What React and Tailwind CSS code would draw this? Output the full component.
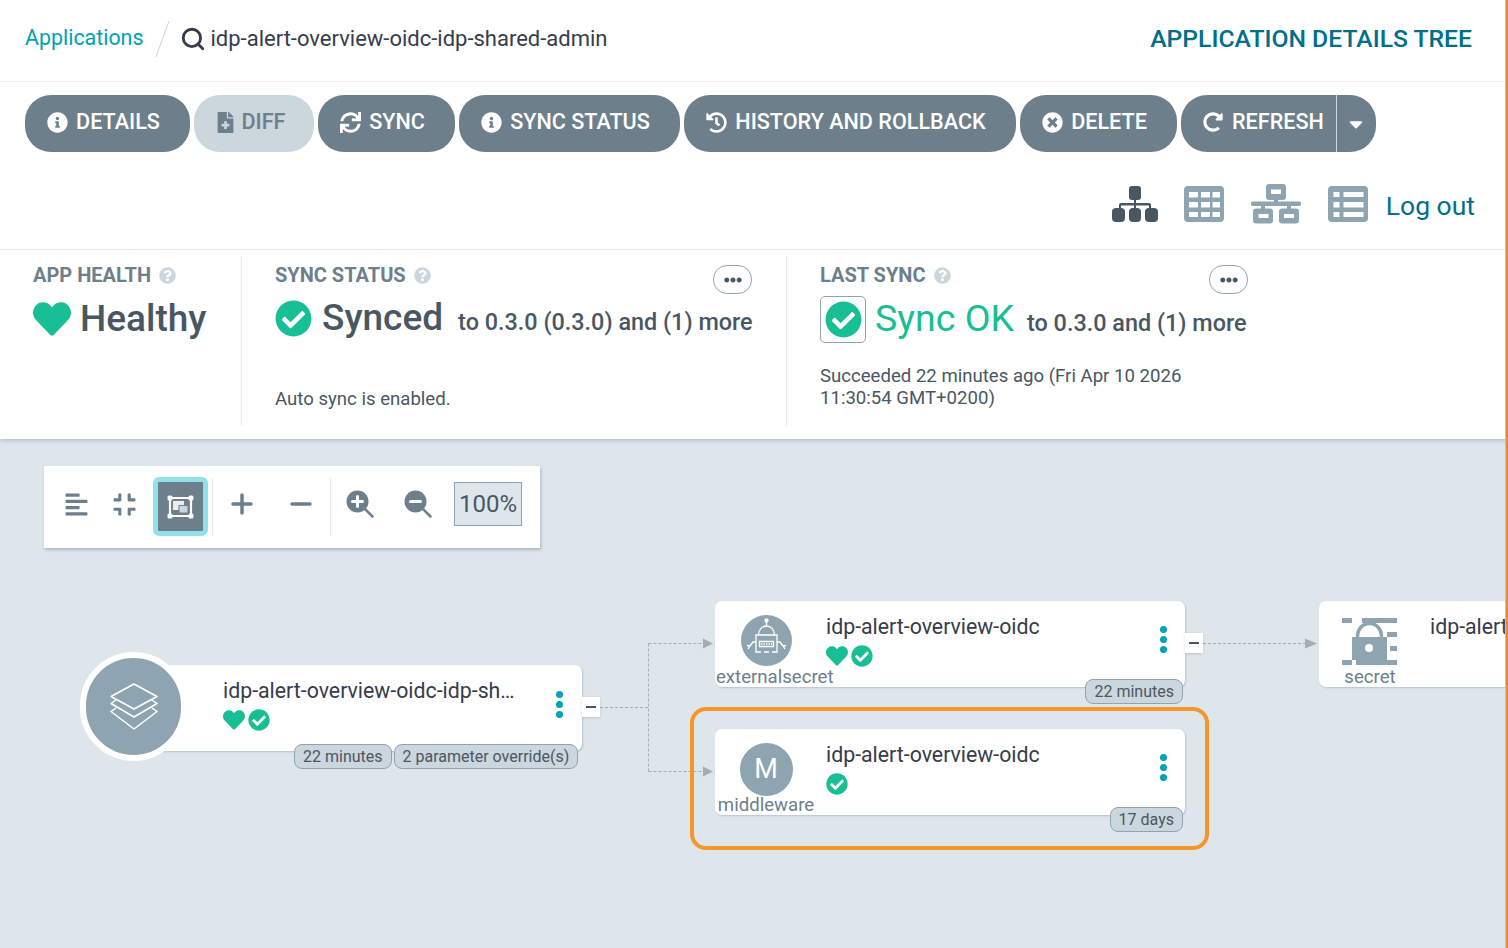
import { Search } from 'lucide-react';
import {
  FaInfoCircle, FaFileMedical, FaSync, FaHistory, FaTimesCircle, FaRedoAlt, FaCaretDown,
  FaHeart, FaCheckCircle, FaQuestionCircle, FaEllipsisH, FaAlignLeft, FaCompress,
} from 'react-icons/fa';

const buttons = [
  { label: 'DETAILS', icon: FaInfoCircle, width: 'w-[165px]' },
  { label: 'DIFF', icon: FaFileMedical, width: 'w-[120px]', disabled: true },
  { label: 'SYNC', icon: FaSync, width: 'w-[137px]' },
  { label: 'SYNC STATUS', icon: FaInfoCircle, width: 'w-[221px]' },
  { label: 'HISTORY AND ROLLBACK', icon: FaHistory, width: 'w-[332px]' },
  { label: 'DELETE', icon: FaTimesCircle, width: 'w-[157px]' },
];

const ActionButton = ({ label, icon: Icon, width, disabled }) => (
  <button
    className={`flex h-[57px] items-center justify-center rounded-[26px] pr-[8px] text-[21.6px] font-medium ${width} ${
      disabled ? 'gap-[6px] bg-[#ccd6dd] text-[#6d7f8b]' : 'gap-[8px] bg-[#6d7f8b] text-white'
    }`}
  >
    <Icon className="mb-[3px] text-[21px]" />
    <span className="mb-[2px]">{label}</span>
  </button>
);

const Label = ({ children }) => (
  <div className="flex h-[24px] items-center gap-[8px] text-[20px] font-bold text-[#6d7f8b]">
    <span>{children}</span>
    <FaQuestionCircle className="text-[17px] text-[#ccd6dd]" />
  </div>
);

const MoreButton = () => (
  <button className="flex h-[29px] w-[39px] items-center justify-center rounded-[14px] border border-[#8fa4b1] bg-white text-[18px] text-[#495763]">
    <FaEllipsisH />
  </button>
);

const ToolIcon = ({ icon: Icon, width }) => (
  <div className={`flex h-[58px] items-center justify-center text-[25px] text-[#6d7f8b] ${width}`}>
    <Icon />
  </div>
);

const Check = () => <FaCheckCircle className="text-[22px] text-[#18be94]" />;
const Heart = () => <FaHeart className="text-[22px] text-[#18be94]" />;

const Tag = ({ children }) => (
  <span className="flex h-[25px] items-center rounded-[8px] border border-[#8fa4b1] bg-[#ccd6dd] px-[8px] text-[16px] text-[#495763]">
    {children}
  </span>
);

const Dots = () => (
  <div className="flex flex-col gap-[3px]">
    <span className="h-[7px] w-[7px] rounded-full bg-[#00a2b3]" />
    <span className="h-[7px] w-[7px] rounded-full bg-[#00a2b3]" />
    <span className="h-[7px] w-[7px] rounded-full bg-[#00a2b3]" />
  </div>
);

const Collapse = ({ className }) => (
  <div className={`absolute flex h-[20px] w-[18px] items-center justify-center bg-white shadow-sm ${className}`}>
    <span className="h-[2px] w-[10px] bg-[#495763]" />
  </div>
);

const Node = ({ className, left, label, statuses, tags, title = 'idp-alert-overview-oidc' }) => (
  <div className={`absolute flex h-[86px] rounded-[7px] bg-white shadow-[1px_1px_2px_#b5c2cc] ${className}`}>
    <div className="relative flex w-[111px] shrink-0 flex-col items-center pr-[9px]">
      {left}
      <span className="absolute bottom-[-5px] left-[1px] w-[100px] text-center text-[18.6px] whitespace-nowrap text-[#6d7f8b]">{label}</span>
    </div>
    <div className="flex-1 pt-[12px]">
      <div className="text-[21.3px] leading-[28px] whitespace-nowrap text-[#363c4a]">{title}</div>
      <div className="mt-[4px] flex items-center gap-[3px]">{statuses}</div>
    </div>
    {tags && (
      <div className="pt-[25px] pr-[18px]">
        <Dots />
      </div>
    )}
    {tags && <div className="absolute right-[2px] bottom-[-17px] flex gap-[2px]">{tags}</div>}
  </div>
);

const RobotIcon = () => (
  <svg viewBox="0 0 51 51" className="mt-[14px] h-[51px] w-[51px]">
    <circle cx="25.5" cy="25.5" r="25.5" fill="#8fa4b1" />
    <g fill="none" stroke="#fff" strokeWidth="1.3">
      <circle cx="25.5" cy="5.500" r="1.500" fill="#fff" />
      <path d="M25.500 7V11M17.500 20c0-5 3.500-9 8-9s8 4 8 9" />
      <path d="M20 37h-5V20h21v17h-5M23 37h5" />
      <path d="M18.500 26.500h14v5h-14z" />
      <path d="M20 29h11" strokeDasharray="1.500 1" />
      <path d="M15 27h-3l-3 4-2 3M9 31l-3-.5M36 27h3l3 4 2 3M42 31l3-.5" />
    </g>
  </svg>
);

const SecretIcon = () => (
  <svg viewBox="0 0 55 47" className="mt-[17px] -ml-[2px] h-[47px] w-[55px]" fill="#8fa4b1">
    <path d="M0 0h10v5H0zM20 0h35v5H20zM45 14h10v5H45zM48 28h7v5h-7zM0 42h10v5H0zM14 42h41v5H14z" />
    <path d="M15.500 19c0-8 5-13.500 12-13.500S39.500 11 39.500 19" fill="none" stroke="#8fa4b1" strokeWidth="3.500" />
    <path fillRule="evenodd" d="M10 19h35v23H10z M27 26a4 4 0 100 8 4 4 0 000-8z" />
  </svg>
);

const LayersIcon = () => (
  <svg viewBox="0 0 48 47" className="h-[47px] w-[48px]" fill="none" stroke="#fff" strokeWidth="1.500" strokeLinejoin="round">
    <path d="M24 1L47 13.500 24 26 1 13.500z" />
    <path d="M6 17L1 20.500 24 34 47 20.500 42 17" />
    <path d="M6 25L1 28.500 24 46 47 28.500 42 25" />
  </svg>
);

const SitemapIcon = () => (
  <svg viewBox="0 0 46 36" className="h-[36px] w-[46px]" fill="#495763">
    <rect x="17" y="0" width="12" height="14" rx="3" />
    <path d="M22 14h2v3h13a2 2 0 012 2v3h-2v-2.500H24V22h-2v-2.500H9V22H7v-3a2 2 0 012-2h13z" />
    <rect x="0" y="22" width="13" height="14" rx="4" />
    <rect x="17" y="22" width="12" height="14" rx="4" />
    <rect x="33" y="22" width="13" height="14" rx="4" />
  </svg>
);

const GridIcon = () => (
  <svg viewBox="0 0 40 36" className="h-[36px] w-[40px]">
    <rect width="40" height="36" rx="4" fill="#8fa4b1" />
    <path
      fill="#fff"
      d="M5 6h9v5.500H5zM17 6h9v5.500h-9zM28.500 6H36v5.500h-7.500zM5 16h9v5.500H5zM17 16h9v5.500h-9zM28.500 16H36v5.500h-7.500zM5 26h9v5H5zM17 26h9v5h-9zM28.500 26H36v5h-7.500z"
    />
  </svg>
);

const NetworkIcon = () => (
  <svg viewBox="0 0 50 40" className="h-[40px] w-[50px]">
    <path
      fill="#8fa4b1"
      fillRule="evenodd"
      d="M18 0h14a3 3 0 013 3v10a3 3 0 01-3 3h-5v1.500h21a2 2 0 010 4.500H40v2.500h5a3 3 0 013 3v9a3 3 0 01-3 3H31a3 3 0 01-3-3v-9a3 3 0 013-3h5V22H14v2.500h5a3 3 0 013 3v9a3 3 0 01-3 3H5a3 3 0 01-3-3v-9a3 3 0 013-3h5V22H2a2 2 0 010-4.500h21V16h-5a3 3 0 01-3-3V3a3 3 0 013-3zM20 5.500V10h10V5.500zM7.500 30v4h10v-4zM33 30v4h10v-4z"
    />
  </svg>
);

const TableIcon = () => (
  <svg viewBox="0 0 40 36" className="h-[36px] w-[40px]">
    <rect width="40" height="36" rx="4" fill="#8fa4b1" />
    <path
      fill="#fff"
      d="M5.500 6h6v5h-6zM15.500 6h20v5h-20zM5.500 16h6v5.500h-6zM15.500 16h20v5.500h-20zM5.500 26h6v5h-6zM15.500 26h20v5h-20z"
    />
  </svg>
);

const UngroupIcon = () => (
  <svg viewBox="0 0 27 24" className="h-[24px] w-[27px]">
    <path d="M3 3h21v18H3z" fill="none" stroke="#fff" strokeWidth="2.200" />
    <rect x="0.500" y="0.500" width="5" height="5" rx="1.500" fill="#fff" />
    <rect x="21.500" y="0.500" width="5" height="5" rx="1.500" fill="#fff" />
    <rect x="0.500" y="18.500" width="5" height="5" rx="1.500" fill="#fff" />
    <rect x="21.500" y="18.500" width="5" height="5" rx="1.500" fill="#fff" />
    <rect x="6" y="6" width="11" height="9" fill="#e8edf0" />
    <rect x="12" y="10.500" width="9" height="7.500" fill="#ccd6dd" stroke="#6d7f8b" />
  </svg>
);

const PlusIcon = () => (
  <svg viewBox="0 0 22 22" className="h-[22px] w-[22px]" stroke="#6d7f8b" strokeWidth="3.500" strokeLinecap="round">
    <path d="M2 11h18M11 2v18" />
  </svg>
);

const MinusIcon = () => (
  <svg viewBox="0 0 22 22" className="h-[22px] w-[22px]" stroke="#6d7f8b" strokeWidth="3.500" strokeLinecap="round">
    <path d="M2 11h18" />
  </svg>
);

const ZoomIcon = ({ plus }) => (
  <svg viewBox="0 0 28 28" className="h-[28px] w-[28px]">
    <path d="M18 18l8.500 8.500" stroke="#6d7f8b" strokeWidth="2.500" strokeLinecap="round" />
    <circle cx="11.500" cy="11.500" r="11" fill="#6d7f8b" />
    <path d={plus ? 'M6.500 11.500h10M11.500 6.500v10' : 'M6.500 11.500h10'} stroke="#fff" strokeWidth="3" strokeLinecap="round" />
  </svg>
);

const ToolCell = ({ width, children }) => (
  <div className={`flex h-[58px] items-center justify-center ${width}`}>{children}</div>
);

const Edges = () => (
  <svg className="absolute inset-0 h-full w-full" fill="none" stroke="#a3adb5" strokeDasharray="3 2">
    <path d="M600 268.500H648.500M648.500 204.500V332.500M648.500 204.500H703M648.500 332.500H703M1203 204.500H1305" />
    <path d="M703 199.500l10 5-10 5zM703 327.500l10 5-10 5zM1305 199.500l12 5-12 5z" fill="#a3adb5" stroke="none" />
  </svg>
);

export default function App() {
  return (
    <div className="relative flex h-[948px] w-[1508px] flex-col overflow-hidden bg-white font-['Roboto',sans-serif]">
      <header className="flex h-[82px] shrink-0 items-center justify-between border-b border-[#eef1f3] pr-[36px] pb-[4px] pl-[25px]">
        <div className="flex items-center">
          <a className="text-[21.4px] text-[#00a2b3]">Applications</a>
          <div className="mr-[17px] ml-[19px] h-[38px] w-px rotate-[20deg] bg-[#ccd6dd]" />
          <Search size={26} strokeWidth={2.6} className="mr-[4px] text-[#363c4a]" />
          <span className="text-[22px] text-[#363c4a]">idp-alert-overview-oidc-idp-shared-admin</span>
        </div>
        <div className="text-[24.7px] font-medium text-[#006f8a]">APPLICATION DETAILS TREE</div>
      </header>

      <div className="flex shrink-0 gap-[4px] pt-[13px] pl-[25px]">
        {buttons.map((b) => (
          <ActionButton key={b.label} {...b} />
        ))}
        <div className="flex h-[57px] overflow-hidden rounded-[26px] bg-[#6d7f8b] text-[21.6px] font-medium text-white">
          <div className="flex w-[156px] items-center gap-[9px] border-r border-[#ccd6dd] pl-[22px]">
            <FaRedoAlt className="mb-[3px] text-[20px]" />
            <span className="mb-[2px]">REFRESH</span>
          </div>
          <div className="flex w-[39px] items-center justify-center pr-[1px]">
            <FaCaretDown className="text-[22px]" />
          </div>
        </div>
      </div>

      <div className="flex h-[98px] shrink-0 items-center justify-end border-b border-[#eef1f3] pt-[7px] pr-[33px]">
        <div className="mr-[26px]"><SitemapIcon /></div>
        <div className="mr-[27px]"><GridIcon /></div>
        <div className="mr-[27px]"><NetworkIcon /></div>
        <div className="mr-[18px]"><TableIcon /></div>
        <a className="mt-[4px] text-[26.5px] text-[#006f8a]">Log out</a>
      </div>

      <section className="relative z-10 flex h-[189px] shrink-0 bg-white pt-[6px] shadow-[0_2px_4px_#b5c2cc]">
        <div className="h-[170px] w-[242px] border-r border-[#e4eaee] pt-[7px] pl-[33px]">
          <Label>APP HEALTH</Label>
          <div className="mt-[10px] flex items-center gap-[9px] text-[37px] leading-[44px] font-medium text-[#495763]">
            <FaHeart className="text-[38px] text-[#18be94]" />
            <span>Healthy</span>
          </div>
        </div>
        <div className="relative h-[170px] w-[545px] border-r border-[#e4eaee] pt-[7px] pl-[33px]">
          <Label>SYNC STATUS</Label>
          <div className="mt-[9px] flex items-center text-[#495763]">
            <FaCheckCircle className="mr-[10px] text-[37px] text-[#18be94]" />
            <div className="flex items-baseline">
              <span className="mr-[15px] text-[37px] leading-[44px] font-medium">Synced</span>
              <span className="text-[23.4px] leading-[30px] font-medium">to 0.3.0 (0.3.0) and (1) more</span>
            </div>
          </div>
          <p className="mt-[46px] text-[18.6px] text-[#495763]">Auto sync is enabled.</p>
          <div className="absolute top-[9px] right-[34px]">
            <MoreButton />
          </div>
        </div>
        <div className="relative w-[461px] pt-[7px] pl-[33px]">
          <Label>LAST SYNC</Label>
          <div className="mt-[9px] flex items-center text-[#495763]">
            <div className="mr-[9px] flex h-[47px] w-[46px] items-center justify-center rounded-[5px] border border-[#8fa4b1]">
              <FaCheckCircle className="text-[37px] text-[#18be94]" />
            </div>
            <div className="mb-[3px] flex items-baseline">
              <span className="mr-[13px] text-[37.5px] leading-[44px] text-[#18be94]">Sync OK</span>
              <span className="text-[23.4px] leading-[30px] font-medium">to 0.3.0 and (1) more</span>
            </div>
          </div>
          <p className="mt-[22px] w-[400px] text-[18.6px] leading-[22px] text-[#495763]">
            Succeeded 22 minutes ago (Fri Apr 10 2026 11:30:54 GMT+0200)
          </p>
          <div className="absolute top-[9px] right-[0px]">
            <MoreButton />
          </div>
        </div>
      </section>

      <main className="relative flex-1 bg-[#dee6eb]">
        <div className="absolute top-[27px] left-[44px] z-10 flex h-[82px] w-[496px] items-center bg-white pb-[6px] pl-[9px] shadow-[1px_2px_3px_#a9b8c3]">
          <ToolIcon icon={FaAlignLeft} width="w-[46px]" />
          <ToolIcon icon={FaCompress} width="w-[50px]" />
          <div className="mt-[5px] ml-[4px] flex h-[59px] w-[55px] items-center justify-center rounded-[6px] border-[5px] border-[#92e1ea] bg-[#6d7f8b]">
            <UngroupIcon />
          </div>
          <div className="mt-[5px] ml-[4px] h-[58px] w-px bg-[#e4eaee]" />
          <ToolCell width="w-[58px]"><PlusIcon /></ToolCell>
          <ToolCell width="w-[59px]"><MinusIcon /></ToolCell>
          <div className="mt-[5px] h-[58px] w-px bg-[#e4eaee]" />
          <ToolCell width="w-[58px]"><ZoomIcon plus /></ToolCell>
          <ToolCell width="w-[58px]"><ZoomIcon /></ToolCell>
          <div className="ml-[7px] flex h-[44px] w-[68px] items-center justify-center border border-[#8fa4b1] bg-[#dee6eb] text-[24px] text-[#495763]">
            100%
          </div>
        </div>

        <Edges />

        <Node className="top-[226px] left-[133px] w-[449px]" left={null} label="" title="" />
        <div className="absolute top-[226px] left-[223px] w-[300px]">
          <div className="pt-[12px] text-[21.3px] leading-[28px] whitespace-nowrap text-[#363c4a]">idp-alert-overview-oidc-idp-sh…</div>
          <div className="mt-[4px] flex items-center gap-[3px]">
            <Heart />
            <Check />
          </div>
        </div>
        <div className="absolute top-[213px] left-[80px] flex h-[109px] w-[107px] items-center justify-center rounded-full border-[6px] border-white bg-[#8fa4b1]">
          <LayersIcon />
        </div>
        <div className="absolute top-[252px] left-[556px]">
          <Dots />
        </div>
        <Collapse className="top-[258px] left-[582px]" />
        <div className="absolute top-[305px] left-[294px] flex gap-[2px]">
          <Tag>22 minutes</Tag>
          <Tag>2 parameter override(s)</Tag>
        </div>

        <Node
          className="top-[162px] left-[715px] w-[470px]"
          left={<RobotIcon />}
          label="externalsecret"
          statuses={<><Heart /><Check /></>}
          tags={<Tag>22 minutes</Tag>}
        />
        <Collapse className="top-[194px] left-[1185px]" />

        <div className="absolute top-[268px] left-[690px] h-[143px] w-[519px] rounded-[16px] border-[4px] border-[#f4962a]" />
        <Node
          className="top-[290px] left-[715px] w-[470px]"
          left={
            <div className="mt-[14px] flex h-[53px] w-[53px] items-center justify-center rounded-full bg-[#8fa4b1] text-[27px] text-white">M</div>
          }
          label="middleware"
          statuses={<Check />}
          tags={<Tag>17 days</Tag>}
        />

        <Node
          className="top-[162px] left-[1319px] w-[300px]"
          left={<SecretIcon />}
          label="secret"
          statuses={null}
        />
      </main>

      <div className="absolute top-0 right-0 bottom-0 z-20 w-[3px] border-l border-[#fbb27c] bg-[#e68a3c]" />
    </div>
  );
}
